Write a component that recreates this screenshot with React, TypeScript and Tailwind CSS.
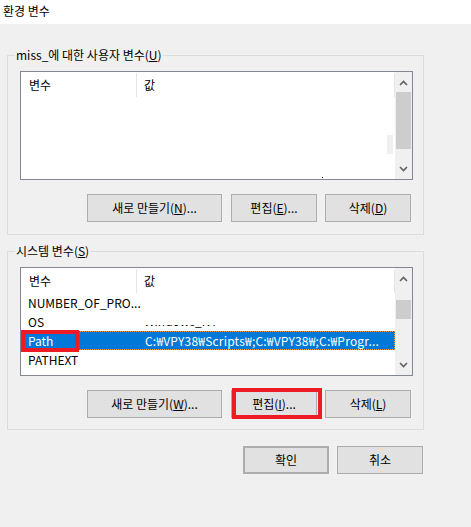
import React from "react";

function Chevron({ up }: { up?: boolean }) {
  return (
    <svg width="9" height="6" viewBox="0 0 9 6">
      <polyline
        points={up ? "1,5 4.5,1.5 8,5" : "1,1 4.5,4.5 8,1"}
        fill="none"
        stroke="#606060"
        strokeWidth="1.6"
      />
    </svg>
  );
}

function ScrollBar({ thumbTop, thumbH }: { thumbTop: number; thumbH: number }) {
  return (
    <div className="w-[17px] bg-[#f0f0f0] flex flex-col">
      <div className="h-[19px] flex items-center justify-center pt-[2px]">
        <Chevron up />
      </div>
      <div className="flex-1 px-[1px]">
        <div className="bg-[#cdcdcd] w-full" style={{ marginTop: thumbTop, height: thumbH }} />
      </div>
      <div className="h-[19px] flex items-center justify-center pb-[2px]">
        <Chevron />
      </div>
    </div>
  );
}

function Header() {
  return (
    <div className="h-[25px] flex items-stretch pt-[1px]">
      <div className="w-[116px] pl-[8px] flex items-center border-r border-[#e5e5e5]">변수</div>
      <div className="flex-1 pl-[7px] flex items-center border-r border-[#e5e5e5]">값</div>
    </div>
  );
}

function Btn({ children, className = "" }: { children: React.ReactNode; className?: string }) {
  return (
    <div
      className={
        "h-[28px] border border-[#adadad] bg-[#e1e1e1] flex items-center justify-center text-[12px] leading-[16px] text-black " +
        className
      }
    >
      {children}
    </div>
  );
}

export default function App() {
  return (
    <div className="w-[471px] h-[527px] bg-[#f0f0f0] font-['Noto_Sans_CJK_KR',sans-serif] text-[12px] leading-[16px] text-black overflow-hidden">
      <div className="h-[24px] bg-white flex items-center pl-[3px] pb-[2px] text-[12px]">환경 변수</div>

      {/* User variables */}
      <div className="mt-[31px] ml-[7px] w-[417px] h-[180px] border border-[#dcdcdc]">
        <div className="-mt-[9px] ml-[7px] px-[1px] w-fit h-[16px] bg-[#f0f0f0] leading-[16px]">
          miss_에 대한 사용자 변수(<u>U</u>)
        </div>
        <div className="mt-[8px] ml-[12px] w-[393px] h-[109px] border border-[#828790] bg-white flex relative">
          <div className="flex-1">
            <Header />
          </div>
          <ScrollBar thumbTop={1} thumbH={57} />
          <div className="absolute left-[366px] top-[63px] w-[6px] h-[19px] bg-[#f0f0f0]" />
          <div className="absolute left-[301px] top-[105px] w-[1px] h-[1px] bg-black" />
        </div>
        <div className="mt-[14px] flex">
          <Btn className="ml-[79px] w-[135px]">
            새로 만들기(<u>N</u>)...
          </Btn>
          <Btn className="ml-[9px] w-[86px]">
            편집(<u>E</u>)...
          </Btn>
          <Btn className="ml-[8px] w-[86px]">
            삭제(<u>D</u>)
          </Btn>
        </div>
      </div>

      {/* System variables */}
      <div className="mt-[16px] ml-[7px] w-[417px] h-[179px] border border-[#dcdcdc]">
        <div className="-mt-[9px] ml-[7px] px-[1px] w-fit h-[16px] bg-[#f0f0f0] leading-[16px]">
          시스템 변수(<u>S</u>)
        </div>
        <div className="mt-[8px] ml-[12px] w-[393px] h-[109px] border border-[#828790] bg-white flex">
          <div className="flex-1 overflow-hidden">
            <Header />
            <div className="h-[19px] flex items-center">
              <div className="w-[116px] pl-[7px]">NUMBER_OF_PRO...</div>
            </div>
            <div className="h-[19px] flex items-center">
              <div className="w-[116px] pl-[7px]">OS</div>
              <div className="pl-[7px] h-[19px] flex flex-col justify-end pb-[2px]">
                <div className="h-[4px] overflow-hidden flex flex-col justify-end">
                  <div className="leading-[16px] shrink-0">Windows_NT</div>
                </div>
              </div>
            </div>
            <div className="relative h-[19px] flex items-center bg-[#0078d7] text-white border border-dotted border-[#f3a34a]">
              <div className="w-[115px] pl-[6px]">Path</div>
              <div className="pl-[8px] whitespace-nowrap tracking-[0.2px]">C:₩VPY38₩Scripts₩;C:₩VPY38₩;C:₩Progr...</div>
              <div className="absolute -left-[1px] -top-[2px] w-[58px] h-[22px] border-[4px] border-[#ed1c24]" />
            </div>
            <div className="h-[19px] flex items-center">
              <div className="w-[116px] pl-[7px]">PATHEXT</div>
            </div>
          </div>
          <ScrollBar thumbTop={13} thumbH={19} />
        </div>
        <div className="mt-[14px] flex">
          <Btn className="ml-[79px] w-[135px]">
            새로 만들기(<u>W</u>)...
          </Btn>
          <div className="ml-[9px] w-[86px] relative">
            <Btn className="w-[86px]">
              편집(<u>I</u>)...
            </Btn>
            <div className="absolute left-[1px] -top-[2px] w-[90px] h-[31px] border-[4px] border-[#ed1c24]" />
          </div>
          <Btn className="ml-[8px] w-[86px]">
            삭제(<u>L</u>)
          </Btn>
        </div>
      </div>

      <div className="mt-[16px] flex">
        <Btn className="ml-[243px] w-[86px] border-2 border-[#0078d7]">확인</Btn>
        <Btn className="ml-[8px] w-[86px]">취소</Btn>
      </div>
    </div>
  );
}
